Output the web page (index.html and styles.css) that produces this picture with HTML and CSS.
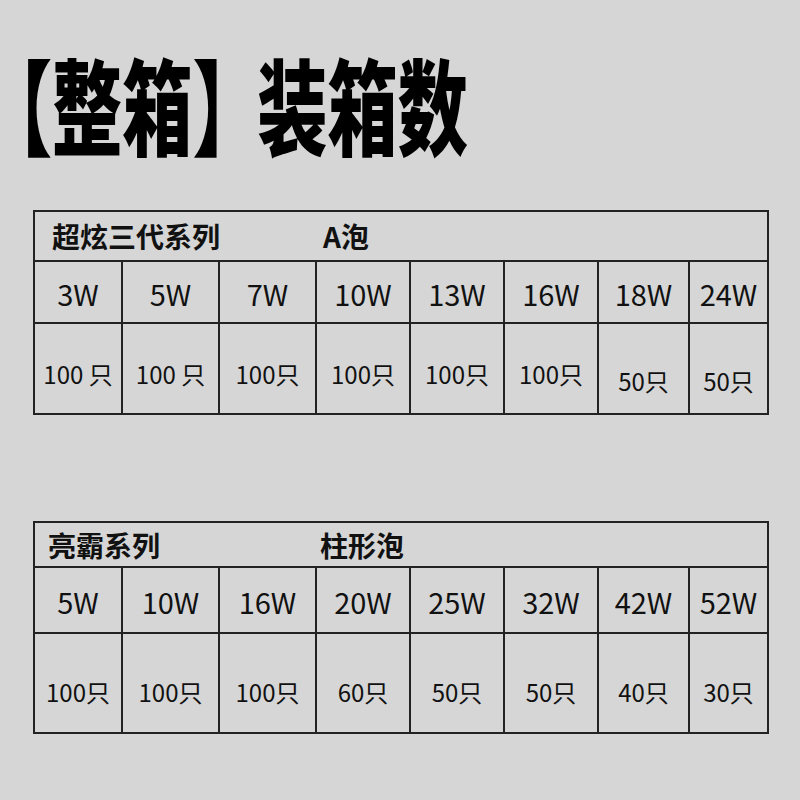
FILE: index.html
```html
<!DOCTYPE html>
<html lang="zh-CN">
<head>
<meta charset="utf-8">
<title>整箱装箱数</title>
<link rel="stylesheet" href="styles.css">
</head>
<body>
<div class="page">
  <h1 class="title"><span class="title-inner"><span class="title-box">【整箱】</span>装箱数</span></h1>

  <div class="sheet sheet-a">
    <div class="cell head"><span class="series">超炫三代系列</span><span>A泡</span></div>
    <div class="cell watt">3W</div>
    <div class="cell watt">5W</div>
    <div class="cell watt">7W</div>
    <div class="cell watt">10W</div>
    <div class="cell watt">13W</div>
    <div class="cell watt">16W</div>
    <div class="cell watt">18W</div>
    <div class="cell watt">24W</div>
    <div class="cell qty">100 只</div>
    <div class="cell qty">100 只</div>
    <div class="cell qty">100只</div>
    <div class="cell qty">100只</div>
    <div class="cell qty">100只</div>
    <div class="cell qty">100只</div>
    <div class="cell qty low">50只</div>
    <div class="cell qty low">50只</div>
  </div>

  <div class="sheet sheet-b">
    <div class="cell head"><span class="series">亮霸系列</span><span>柱形泡</span></div>
    <div class="cell watt">5W</div>
    <div class="cell watt">10W</div>
    <div class="cell watt">16W</div>
    <div class="cell watt">20W</div>
    <div class="cell watt">25W</div>
    <div class="cell watt">32W</div>
    <div class="cell watt">42W</div>
    <div class="cell watt">52W</div>
    <div class="cell qty">100只</div>
    <div class="cell qty">100只</div>
    <div class="cell qty">100只</div>
    <div class="cell qty">60只</div>
    <div class="cell qty">50只</div>
    <div class="cell qty">50只</div>
    <div class="cell qty">40只</div>
    <div class="cell qty">30只</div>
  </div>
</div>
</body>
</html>
```

FILE: styles.css
```css
html, body {
  margin: 0;
  padding: 0;
  background: #d6d6d6;
}

body {
  width: 800px;
  height: 800px;
  overflow: hidden;
  font-family: "Noto Sans CJK SC", "Noto Sans", sans-serif;
  color: #111;
}

.page {
  padding: 43px 0 0 0;
}

.title {
  margin: 0;
  height: 120px;
  font-size: 104px;
  line-height: 120px;
  font-weight: 900;
  color: #000;
  white-space: nowrap;
}

.title-inner {
  display: inline-block;
  margin-left: 17px;
  font-feature-settings: "halt" 1;
  transform: scaleX(0.675);
  transform-origin: 0 0;
}

.title-box {
  margin-right: 44px;
}

.sheet {
  margin-left: 33px;
  width: 736px;
  display: grid;
  grid-template-columns: 88px 97px 97px 94px 94px 94px 91px 79px;
  border-left: 2px solid #222;
  border-top: 2px solid #222;
  box-sizing: border-box;
}

.sheet-a {
  margin-top: 47px;
  grid-template-rows: 50px 62px 91px;
}

.sheet-b {
  margin-top: 106px;
  grid-template-rows: 45px 66px 100px;
}

.cell {
  border-right: 2px solid #222;
  border-bottom: 2px solid #222;
  box-sizing: border-box;
  display: flex;
  align-items: center;
  justify-content: center;
  white-space: nowrap;
}

.head {
  grid-column: 1 / -1;
  justify-content: flex-start;
  font-size: 28px;
  font-weight: 700;
  color: #111;
}

.sheet-a .head {
  padding-left: 17px;
}

.sheet-b .head {
  padding-left: 13px;
}

.series {
  display: inline-block;
}

.sheet-a .series {
  width: 271px;
}

.sheet-b .series {
  width: 272px;
}

.watt {
  font-size: 29px;
  font-weight: 400;
  padding-top: 2px;
}

.qty {
  font-size: 24px;
  font-weight: 400;
}

.sheet-a .qty {
  padding-top: 10px;
}

.sheet-a .qty.low {
  padding-top: 24px;
}

.sheet-b .qty {
  padding-top: 16px;
}
```
